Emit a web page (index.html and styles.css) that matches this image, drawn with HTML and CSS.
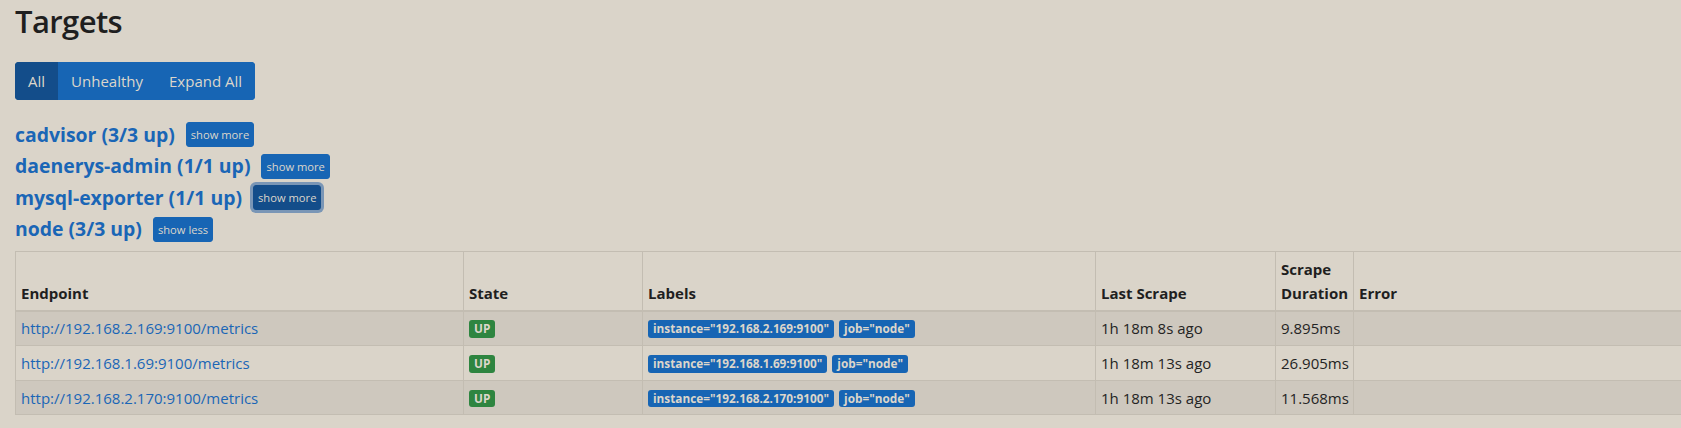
FILE: index.html
```html
<!DOCTYPE html>
<html lang="en">
<head>
<meta charset="utf-8">
<title>Targets</title>
<link rel="stylesheet" href="styles.css">
</head>
<body>
<div class="page">
  <h1 class="title">Targets</h1>
  <div class="btn-group">
    <button class="btn active">All</button>
    <button class="btn">Unhealthy</button>
    <button class="btn">Expand All</button>
  </div>
  <div class="pools">
    <div class="pool"><a class="pool-name" href="#">cadvisor (3/3 up)</a><button class="btn-sm">show more</button></div>
    <div class="pool"><a class="pool-name" href="#">daenerys-admin (1/1 up)</a><button class="btn-sm">show more</button></div>
    <div class="pool"><a class="pool-name" href="#">mysql-exporter (1/1 up)</a><button class="btn-sm focus">show more</button></div>
    <div class="pool"><a class="pool-name" href="#">node (3/3 up)</a><button class="btn-sm">show less</button></div>
  </div>
  <table class="targets">
    <colgroup>
      <col class="c-endpoint"><col class="c-state"><col class="c-labels"><col class="c-last"><col class="c-dur"><col class="c-err">
    </colgroup>
    <thead>
      <tr><th>Endpoint</th><th>State</th><th>Labels</th><th>Last Scrape</th><th>Scrape Duration</th><th>Error</th></tr>
    </thead>
    <tbody>
      <tr class="odd">
        <td><a href="#">http://192.168.2.169:9100/metrics</a></td>
        <td><span class="badge up">UP</span></td>
        <td><span class="badge lbl">instance="192.168.2.169:9100"</span><span class="badge lbl">job="node"</span></td>
        <td>1h 18m 8s ago</td>
        <td>9.895ms</td>
        <td></td>
      </tr>
      <tr>
        <td><a href="#">http://192.168.1.69:9100/metrics</a></td>
        <td><span class="badge up">UP</span></td>
        <td><span class="badge lbl">instance="192.168.1.69:9100"</span><span class="badge lbl">job="node"</span></td>
        <td>1h 18m 13s ago</td>
        <td>26.905ms</td>
        <td></td>
      </tr>
      <tr class="odd">
        <td><a href="#">http://192.168.2.170:9100/metrics</a></td>
        <td><span class="badge up">UP</span></td>
        <td><span class="badge lbl">instance="192.168.2.170:9100"</span><span class="badge lbl">job="node"</span></td>
        <td>1h 18m 13s ago</td>
        <td>11.568ms</td>
        <td></td>
      </tr>
    </tbody>
  </table>
</div>
</body>
</html>
```
FILE: styles.css
```css
html, body {
  margin: 0;
  padding: 0;
  background: #dad4c9;
  overflow: hidden;
}
body {
  font-family: "Open Sans", "Noto Sans", "Liberation Sans", sans-serif;
  font-size: 15px;
  line-height: 24px;
  color: #242424;
}
.page {
  padding-left: 15px;
  overflow: hidden;
}
.title {
  margin: 0;
  font-size: 31px;
  font-weight: 600;
  letter-spacing: -0.6px;
  line-height: 42px;
  color: #1f1f1f;
}
.btn-group {
  display: inline-flex;
  margin-top: 20px;
  border-radius: 4px;
  overflow: hidden;
}
.btn {
  font-family: inherit;
  font-size: 15px;
  line-height: 24px;
  padding: 6px 12px;
  border: 1px solid #1765b4;
  background: #1765b4;
  color: #dcd6cb;
  margin: 0;
}
.btn.active {
  background: #134d8a;
  border-color: #134d8a;
}
.pools {
  margin-top: 18.75px;
}
.pool {
  display: flex;
  align-items: center;
  height: 31.5px;
  gap: 11px;
}
.pool-name {
  font-size: 19.4px;
  font-weight: 700;
  color: #1a66b6;
  text-decoration: none;
  line-height: 24px;
}
.btn-sm {
  font-family: inherit;
  font-size: 11.2px;
  line-height: 17px;
  padding: 3px 4px;
  border: 1px solid #1765b4;
  background: #1765b4;
  color: #dcd6cb;
  border-radius: 3px;
  margin: 0;
}
.btn-sm.focus {
  background: #134d8a;
  border-color: #134d8a;
  box-shadow: 0 0 0 3px rgba(90, 130, 175, 0.75);
}
.targets {
  margin-top: 6.25px;
  width: 1760px;
  table-layout: fixed;
  border-collapse: collapse;
}
.c-endpoint { width: 448px; }
.c-state { width: 179px; }
.c-labels { width: 453px; }
.c-last { width: 180px; }
.c-dur { width: 78px; }
.c-err { width: auto; }
.targets th, .targets td {
  border: 1px solid #c3bdb2;
  padding: 4.8px 5px;
  text-align: left;
  vertical-align: top;
}
.targets th {
  vertical-align: bottom;
  font-weight: 700;
  border-bottom: 2px solid #c3bdb2;
  color: #1f1f1f;
}
.targets tr.odd td {
  background: #cec8be;
}
.targets a {
  color: #1a66b6;
  text-decoration: none;
}
.badge {
  display: inline-block;
  font-size: 11.8px;
  font-weight: 700;
  line-height: 1;
  padding: 3px 5px;
  border-radius: 3px;
  color: #dcd6cb;
  vertical-align: 1px;
}
.badge.up {
  background: #2e8540;
}
.badge.lbl {
  background: #1765b4;
  margin-right: 5px;
}
```
